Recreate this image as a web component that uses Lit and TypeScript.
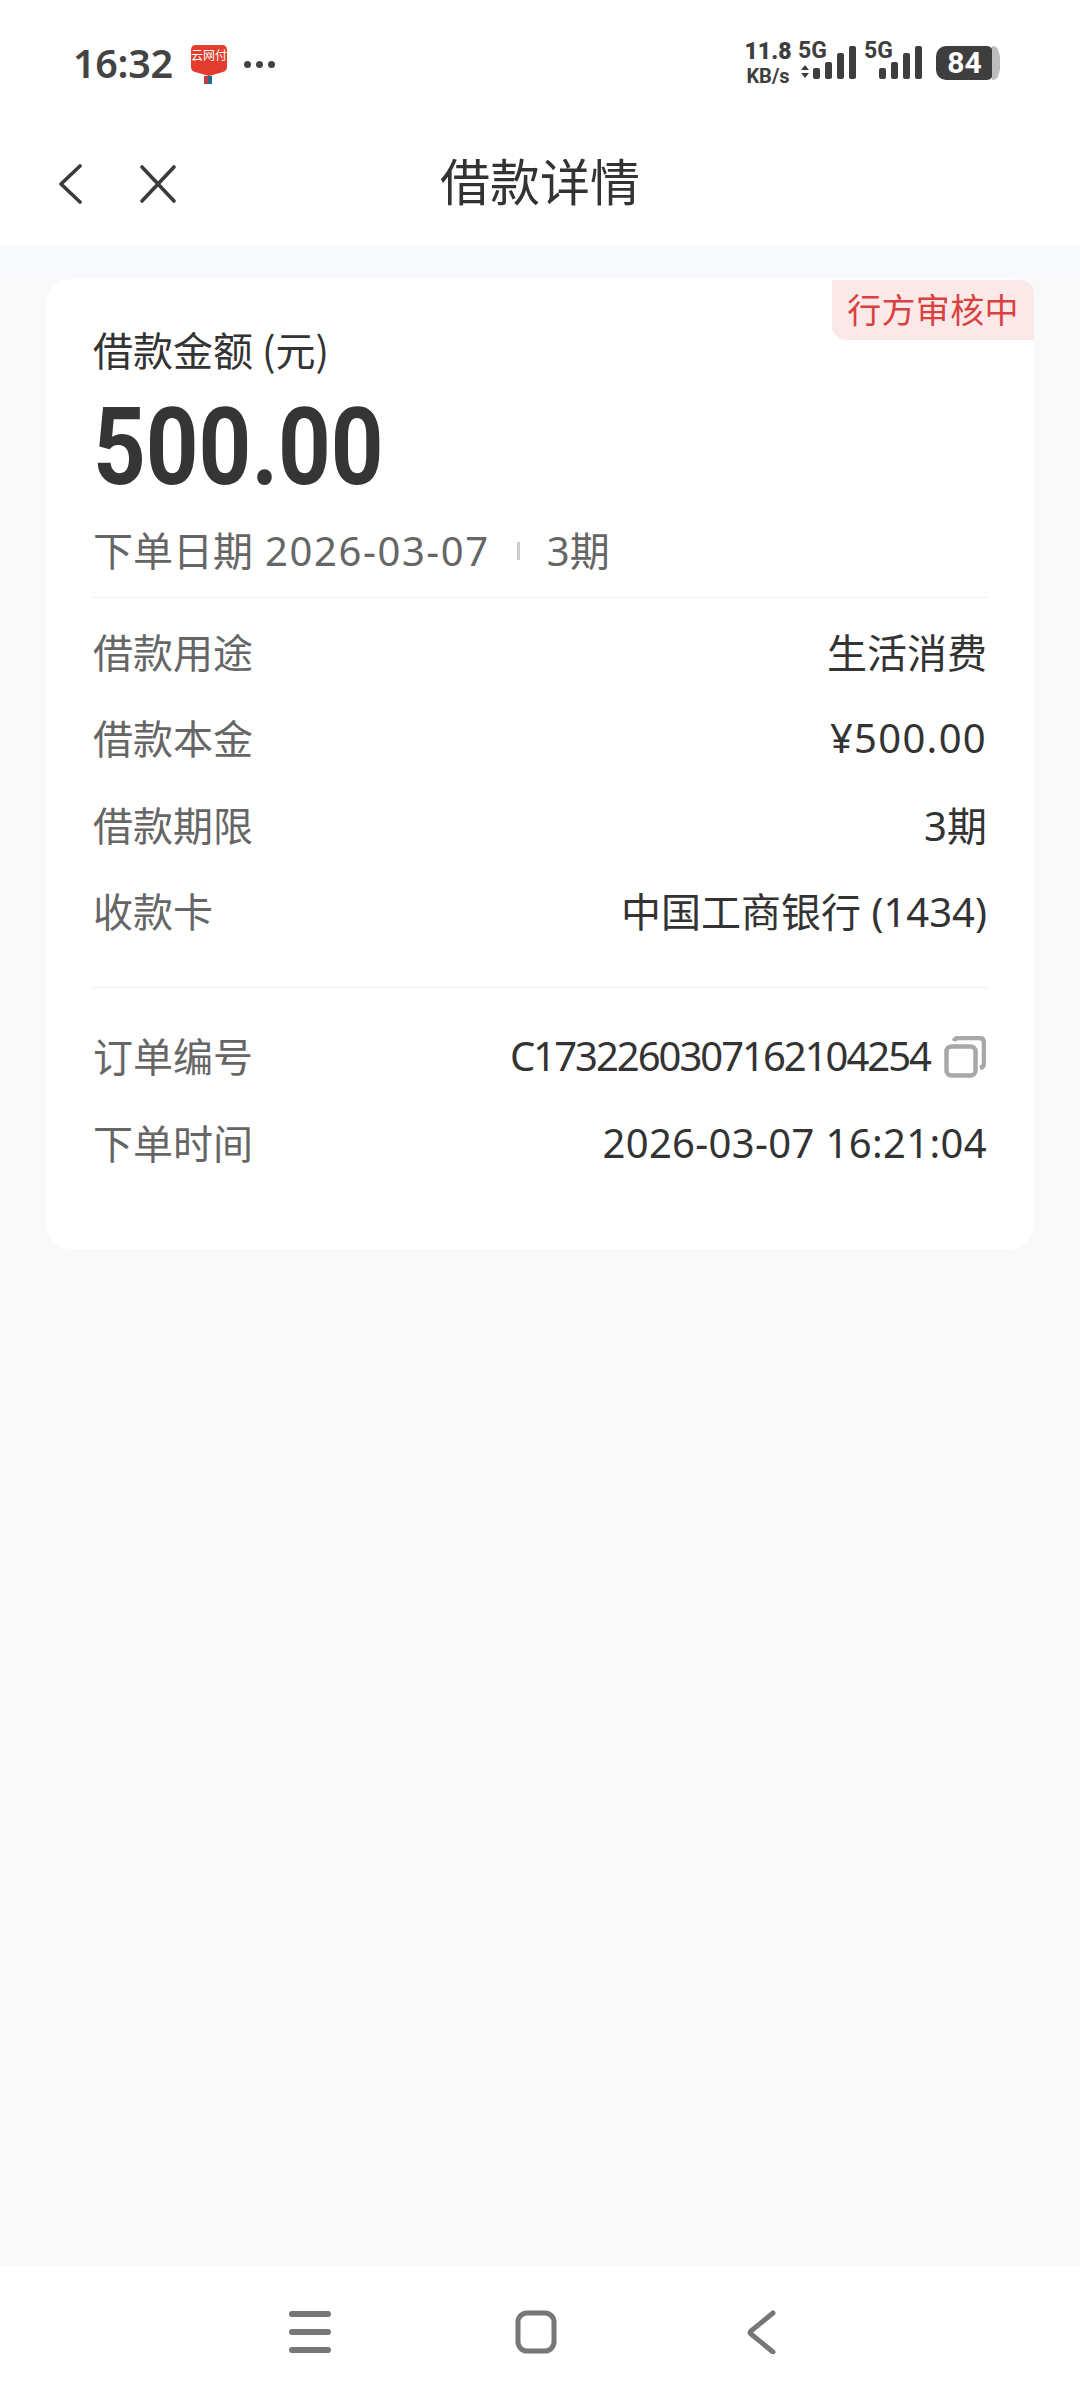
import { LitElement, html, css, svg } from "lit";
import { customElement } from "lit/decorators.js";

@customElement("app-root")
export class AppRoot extends LitElement {
  static styles = css`
    :host { display: flex; flex-direction: column; width: 1080px; height: 2400px; background: #f9f9f9; color: #333;
      font-family: "Noto Sans", "Noto Sans CJK SC", sans-serif; overflow: hidden; }
    .top { background: #fff; height: 245px; display: flex; flex-direction: column; flex: none; }
    .status { height: 110px; display: flex; justify-content: space-between; align-items: flex-start; padding: 0 80px 0 73px; }
    .sleft { display: flex; align-items: center; margin-top: 38px; color: #444; }
    .time { font: 600 39.5px/46px "Noto Sans", sans-serif; width: 117px; letter-spacing: -0.3px; }
    .logo { width: 38px; height: 44px; display: block; margin-top: 6px; }
    .dots { display: flex; gap: 5px; margin-left: 16px; margin-top: 2px; }
    .dots i { width: 7px; height: 7px; border-radius: 50%; background: #444; }
    .sright { display: flex; align-items: flex-start; margin-top: 40px; color: #3e3e3e; font-family: Roboto, sans-serif; font-weight: 700; }
    .speed { width: 50px; font-size: 20px; line-height: 24px; text-align: center; padding-left: 2px; margin-left: -2px; }
    .speed b { display: block; font-size: 23px; }
    .net { position: relative; width: 66px; height: 42px; }
    .g5 { position: absolute; left: 5px; top: 0; font-size: 23px; line-height: 22px; }
    .net svg { position: absolute; left: 0; top: 0; width: 66px; height: 42px; }
    .battery { display: flex; align-items: center; margin-left: 11px; margin-top: 6px; }
    .bbody { width: 57px; height: 34px; border-radius: 10px 6px 6px 10px; background: #3e3e3e; color: #fff; font-size: 30px; line-height: 34px; text-align: center; }
    .btip { width: 8px; height: 34px; background: #bdbdbd; border-radius: 0 8px 8px 0; margin-left: -1px; clip-path: polygon(0 0, 60% 0, 100% 30%, 100% 70%, 60% 100%, 0 100%); }
    .nav { position: relative; flex: 1; display: flex; align-items: center; padding-left: 58px; padding-top: 13px; }
    .nav svg { display: block; }
    .nav .back { width: 24px; height: 40px; }
    .nav .close { width: 40px; height: 40px; margin-left: 56px; }
    .title { position: absolute; left: 0; right: 0; top: 6px; line-height: 127px; text-align: center; font-size: 50px; font-family: "Noto Sans CJK SC", sans-serif; color: #333; }
    .band { height: 34px; background: #f9fafd; flex: none; }
    .card { position: relative; margin: 0 46px; background: #fff; border-radius: 24px; padding: 45px 47px 64px 47px; flex: none; }
    .badge { position: absolute; top: 1px; right: 0; width: 202px; height: 60px; background: #fbe9e9; color: #d9423f; font: 400 34px/58px "Noto Sans CJK SC", sans-serif; letter-spacing: 0.3px; text-align: center; border-radius: 0 14px 0 14px; }
    .lbl { font-size: 40px; line-height: 50px; color: #333; font-family: "Noto Sans CJK SC", sans-serif; }
    .amt { font: 700 107px/110px Roboto, sans-serif; color: #353535; margin-top: 19px; transform: scaleX(0.86); transform-origin: left center; white-space: nowrap; }
    .meta { display: flex; align-items: center; margin-top: 21px; height: 50px; font-size: 40px; color: #666; }
    .meta .sep { width: 3px; height: 18px; background: #ccc; margin: 4px 27px 0 27px; }
    .meta .d { margin-left: 12px; letter-spacing: 1.6px; padding-top: 2px; }
    .hr { height: 1px; background: #efefef; }
    .hr.a { margin-top: 23px; }
    .hr.b { margin-top: 34px; margin-bottom: 24px; }
    .rows { padding-top: 10px; }
    .row { display: flex; justify-content: space-between; align-items: center; height: 86.3px; font-size: 40px; }
    .row .k { color: #666; }
    .row .v { color: #333; display: flex; align-items: center; }
    .tight { letter-spacing: -2px; }
    .wide { letter-spacing: 0.35px; padding-top: 2px; }
    .yen { letter-spacing: 1.3px; }
    .copy { width: 42px; height: 42px; margin: 4px 1px 0 14px; display: block; }
    .foot { margin-top: auto; height: 134px; background: #fff; display: flex; flex: none; position: relative; }
    .foot svg { position: absolute; top: 44px; width: 44px; height: 44px; }
    .foot .m { left: 288px; } .foot .h { left: 514px; } .foot .bk { left: 740px; }
  `;

  render() {
    const barRects = [0, 12, 24, 36].map((dx, i) => {
      const h = [11, 17, 26, 33][i];
      return svg`<rect x=${dx + 20} y=${39 - h} width="7" height=${h} rx="2" fill="#3e3e3e"></rect>`;
    });
    const rows = [["借款用途", "生活消费", ""], ["借款本金", "¥500.00", "yen"], ["借款期限", "3期", ""], ["收款卡", "中国工商银行 (1434)", ""]];
    return html`
      <div class="top">
        <div class="status">
          <div class="sleft">
            <span class="time">16:32</span>
            <svg class="logo" viewBox="0 0 38 44">
              <path d="M6 1h26q5 0 5 5v17q0 4-4 5l-14 4-14-4q-4-1-4-5V6q0-5 5-5z" fill="#e23d2e"></path>
              <text x="19" y="16" font-size="12" fill="#fff" text-anchor="middle" font-family="Noto Sans CJK SC">云网付</text>
              <rect x="14" y="32" width="4" height="8" fill="#c23b4b"></rect>
              <rect x="18" y="32" width="4" height="8" fill="#1f6d8c"></rect>
            </svg>
            <div class="dots"><i></i><i></i><i></i></div>
          </div>
          <div class="sright">
            <div class="speed"><b>11.8</b>KB/s</div>
            <div class="net">
              <span class="g5">5G</span>
              <svg viewBox="0 0 66 42">
                <path d="M8 30l4-5 4 5zM8 33l4 5 4-5z" fill="#3e3e3e"></path>
                ${barRects}
              </svg>
            </div>
            <div class="net">
              <span class="g5">5G</span>
              <svg viewBox="0 0 66 42">${barRects}</svg>
            </div>
            <div class="battery"><div class="bbody">84</div><div class="btip"></div></div>
          </div>
        </div>
        <div class="nav">
          <svg class="back" viewBox="0 0 24 40"><path d="M22 2L3 20l19 18" fill="none" stroke="#3a3a3a" stroke-width="3.6" stroke-linecap="round" stroke-linejoin="round"></path></svg>
          <svg class="close" viewBox="0 0 40 40"><path d="M4 3l32 34M36 3L4 37" fill="none" stroke="#3a3a3a" stroke-width="3.6" stroke-linecap="round"></path></svg>
          <div class="title">借款详情</div>
        </div>
      </div>
      <div class="band"></div>
      <div class="card">
        <div class="badge">行方审核中</div>
        <div class="lbl">借款金额 (元)</div>
        <div class="amt">500.00</div>
        <div class="meta"><span>下单日期</span><span class="d">2026-03-07</span><span class="sep"></span><span>3期</span></div>
        <div class="hr a"></div>
        <div class="rows">
          ${rows.map(([k, v, c]) => html`<div class="row"><span class="k">${k}</span><span class="v ${c}">${v}</span></div>`)}
        </div>
        <div class="hr b"></div>
        <div class="row"><span class="k">订单编号</span><span class="v"><span class="tight">C1732260307162104254</span>
          <svg class="copy" viewBox="0 0 42 42"><rect x="2.500" y="10.500" width="29" height="29" rx="5" fill="none" stroke="#a8a8a8" stroke-width="4.500"></rect><path d="M10 5q1-3 5-3h20q5 0 5 5v20q0 4-4 5" fill="none" stroke="#a8a8a8" stroke-width="4.500"></path></svg></span></div>
        <div class="row"><span class="k">下单时间</span><span class="v wide">2026-03-07 16:21:04</span></div>
      </div>
      <div class="foot">
        <svg class="m" viewBox="0 0 44 44"><path d="M4 4h36M4 22h36M4 40h36" stroke="#777" stroke-width="6" stroke-linecap="round"></path></svg>
        <svg class="h" viewBox="0 0 44 44"><rect x="4" y="3" width="36" height="38" rx="9" fill="none" stroke="#777" stroke-width="5"></rect></svg>
        <svg class="bk" viewBox="0 0 44 44"><path d="M33 3L11 21q-2 1.500 0 3l22 18" fill="none" stroke="#777" stroke-width="5" stroke-linecap="round"></path></svg>
      </div>
    `;
  }
}
